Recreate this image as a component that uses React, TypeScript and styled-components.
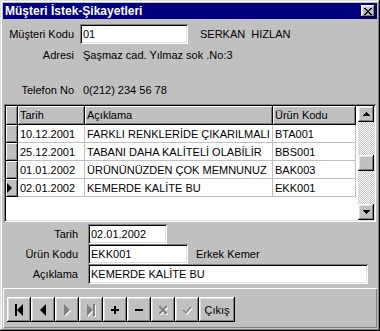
import React from "react";
import styled, { createGlobalStyle } from "styled-components";

const GlobalStyle = createGlobalStyle`
  html, body {
    margin: 0;
    padding: 0;
    background: #c0c0c0;
  }
  body {
    font-family: "Liberation Sans", Arial, sans-serif;
    font-size: 11px;
    color: #000;
  }
`;

const raised = `
  box-shadow: inset -1px -1px #000, inset 1px 1px #fff,
    inset -2px -2px #808080, inset 2px 2px #dfdfdf;
`;

const sunken = `
  box-shadow: inset 1px 1px #808080, inset -1px -1px #fff,
    inset 2px 2px #000, inset -2px -2px #dfdfdf;
`;

const Window = styled.div`
  width: 380px;
  height: 331px;
  box-sizing: border-box;
  padding: 3px;
  background: #c0c0c0;
  box-shadow: inset -1px -1px #000, inset 1px 1px #dfdfdf,
    inset -2px -2px #808080, inset 2px 2px #fff;
  display: flex;
  flex-direction: column;
`;

const TitleBar = styled.div`
  height: 16px;
  background: #000080;
  color: #fff;
  display: flex;
  align-items: center;
  justify-content: space-between;
  padding: 0 2px 0 2px;
  flex: none;
`;

const TitleText = styled.span`
  font-weight: bold;
  font-size: 12px;
  white-space: nowrap;
`;

const CloseButton = styled.div`
  width: 14px;
  height: 12px;
  background: #c0c0c0;
  ${raised}
  display: flex;
  align-items: center;
  justify-content: center;
`;

const Client = styled.div`
  flex: 1;
  display: flex;
  flex-direction: column;
`;

const FieldRow = styled.div<{ $mt?: number }>`
  display: flex;
  align-items: center;
  height: 20px;
  margin-top: ${(p) => p.$mt ?? 0}px;
  flex: none;
`;

const Label = styled.span<{ $w: number; $gap: number }>`
  width: ${(p) => p.$w}px;
  margin-right: ${(p) => p.$gap}px;
  text-align: right;
  white-space: nowrap;
  flex: none;
`;

const Value = styled.span<{ $ml?: number }>`
  margin-left: ${(p) => p.$ml ?? 0}px;
  white-space: pre;
`;

const Input = styled.div<{ $w: number; $h?: number }>`
  width: ${(p) => p.$w}px;
  height: ${(p) => p.$h ?? 20}px;
  box-sizing: border-box;
  background: #fff;
  ${sunken}
  padding-left: 3px;
  display: flex;
  align-items: center;
  white-space: nowrap;
  flex: none;
`;

const Grid = styled.div`
  margin: 4px 1px 0 1px;
  height: 118px;
  box-sizing: border-box;
  padding: 2px;
  background: #fff;
  ${sunken}
  display: flex;
  flex: none;
`;

const Table = styled.div`
  flex: 1;
  display: grid;
  grid-template-columns: 12px 67px 188px 83px 1fr;
  grid-auto-rows: 18px;
  grid-template-rows: 19px;
  align-content: start;
`;

const HeadCell = styled.div`
  background: #c0c0c0;
  border-right: 1px solid #000;
  border-bottom: 1px solid #000;
  box-shadow: inset 1px 1px #fff, inset -1px -1px #808080;
  padding-left: 2px;
  display: flex;
  align-items: center;
  white-space: nowrap;
  overflow: hidden;
`;

const IndicatorCell = styled(HeadCell)`
  padding-left: 1px;
`;

const Cell = styled.div`
  border-right: 1px solid #c0c0c0;
  border-bottom: 1px solid #c0c0c0;
  padding-left: 2px;
  display: flex;
  align-items: center;
  white-space: nowrap;
  overflow: hidden;
`;

const Filler = styled.div``;

const ScrollBar = styled.div`
  width: 16px;
  display: flex;
  flex-direction: column;
  flex: none;
`;

const ScrollButton = styled.div`
  width: 16px;
  height: 16px;
  box-sizing: border-box;
  background: #c0c0c0;
  ${raised}
  display: flex;
  align-items: center;
  justify-content: center;
  flex: none;
`;

const Track = styled.div`
  flex: 1;
  background: repeating-conic-gradient(#c0c0c0 0 25%, #fff 0 50%) 0 0 / 2px 2px;
  display: flex;
  flex-direction: column;
  padding-top: 33px;
`;

const Thumb = styled(ScrollButton)``;

const NavPanel = styled.div`
  flex: 1;
  margin-top: 4px;
  box-shadow: inset 1px 1px #fff, inset -1px -1px #808080;
  display: flex;
  align-items: flex-start;
  padding: 9px 4px 0 4px;
`;

const NavButton = styled.div<{ $w?: number }>`
  width: ${(p) => p.$w ?? 24}px;
  height: 25px;
  box-sizing: border-box;
  background: #c0c0c0;
  ${raised}
  display: flex;
  align-items: center;
  justify-content: center;
  flex: none;
`;

type Row = { tarih: string; aciklama: string; urun: string };

const rows: Row[] = [
  { tarih: "10.12.2001", aciklama: "FARKLI RENKLERİDE ÇIKARILMALI", urun: "BTA001" },
  { tarih: "25.12.2001", aciklama: "TABANI DAHA KALİTELİ OLABİLİR", urun: "BBS001" },
  { tarih: "01.01.2002", aciklama: "ÜRÜNÜNÜZDEN ÇOK MEMNUNUZ", urun: "BAK003" },
  { tarih: "02.01.2002", aciklama: "KEMERDE KALİTE BU", urun: "EKK001" },
];

const Glyph: React.FC<{ d: string; disabled?: boolean }> = ({ d, disabled }) => (
  <svg width="14" height="14" viewBox="0 0 14 14">
    {disabled && <path d={d} fill="#fff" transform="translate(1 1)" />}
    <path d={d} fill={disabled ? "#808080" : "#000"} />
  </svg>
);

const glyphs = {
  first: "M3 1h2v12H3z M5 7L11 1v12z",
  prior: "M4 7L10 1v12z",
  next: "M4 1l6 6-6 6z",
  last: "M3 1l6 6-6 6z M9 1h2v12H9z",
  plus: "M6 3h2v3h3v2H8v3H6V8H3V6h3z",
  minus: "M3 6h8v2H3z",
  cancel: "M3 3h1.5l2.5 2.5 2.5-2.5H11v1.5L8.5 7 11 9.5V11H9.5L7 8.5 4.5 11H3V9.5L5.5 7 3 4.5z",
  post: "M2 7h2l2 2 4-5h2l-6 7z",
};

const App: React.FC = () => {
  return (
    <>
      <GlobalStyle />
      <Window>
        <TitleBar>
          <TitleText>Müşteri İstek-Şikayetleri</TitleText>
          <CloseButton>
            <svg width="8" height="7" viewBox="0 0 8 7" shapeRendering="crispEdges">
              <path
                d="M0 0h2v1h1v1h2V1h1V0h2v1H7v1H6v1H5v1h1v1h1v1h1v1H6V6H5V5H3v1H2v1H0V6h1V5h1V4h1V3H2V2H1V1H0z"
                fill="#000"
              />
            </svg>
          </CloseButton>
        </TitleBar>

        <Client>
          <FieldRow $mt={5}>
            <Label $w={71} $gap={6}>Müşteri Kodu</Label>
            <Input $w={108}>01</Input>
            <Value $ml={12}>SERKAN  HIZLAN</Value>
          </FieldRow>
          <FieldRow $mt={1}>
            <Label $w={71} $gap={9}>Adresi</Label>
            <Value>Şaşmaz cad. Yılmaz sok .No:3</Value>
          </FieldRow>
          <FieldRow $mt={15}>
            <Label $w={71} $gap={9}>Telefon No</Label>
            <Value>0(212) 234 56 78</Value>
          </FieldRow>

          <Grid>
            <Table>
              <IndicatorCell />
              <HeadCell>Tarih</HeadCell>
              <HeadCell>Açıklama</HeadCell>
              <HeadCell>Ürün Kodu</HeadCell>
              <Filler />
              {rows.map((r, i) => (
                <React.Fragment key={r.tarih}>
                  <IndicatorCell>
                    {i === rows.length - 1 && (
                      <svg width="6" height="10" viewBox="0 0 6 10">
                        <path d="M0 0l5 5-5 5z" fill="#000" />
                      </svg>
                    )}
                  </IndicatorCell>
                  <Cell>{r.tarih}</Cell>
                  <Cell>{r.aciklama}</Cell>
                  <Cell>{r.urun}</Cell>
                  <Filler />
                </React.Fragment>
              ))}
            </Table>
            <ScrollBar>
              <ScrollButton>
                <svg width="7" height="4" viewBox="0 0 7 4" shapeRendering="crispEdges">
                  <path d="M3 0h1v1h1v1h1v1h1v1H0V3h1V2h1V1h1z" fill="#000" />
                </svg>
              </ScrollButton>
              <Track>
                <Thumb />
              </Track>
              <ScrollButton>
                <svg width="7" height="4" viewBox="0 0 7 4" shapeRendering="crispEdges">
                  <path d="M0 0h7v1H6v1H5v1H4v1H3V3H2V2H1V1H0z" fill="#000" />
                </svg>
              </ScrollButton>
            </ScrollBar>
          </Grid>

          <FieldRow $mt={2}>
            <Label $w={75} $gap={10}>Tarih</Label>
            <Input $w={79}>02.01.2002</Input>
          </FieldRow>
          <FieldRow>
            <Label $w={75} $gap={10}>Ürün Kodu</Label>
            <Input $w={100}>EKK001</Input>
            <Value $ml={8}>Erkek Kemer</Value>
          </FieldRow>
          <FieldRow>
            <Label $w={75} $gap={10}>Açıklama</Label>
            <Input $w={280}>KEMERDE KALİTE BU</Input>
          </FieldRow>

          <NavPanel>
            <NavButton><Glyph d={glyphs.first} /></NavButton>
            <NavButton><Glyph d={glyphs.prior} /></NavButton>
            <NavButton><Glyph d={glyphs.next} disabled /></NavButton>
            <NavButton><Glyph d={glyphs.last} disabled /></NavButton>
            <NavButton><Glyph d={glyphs.plus} /></NavButton>
            <NavButton><Glyph d={glyphs.minus} /></NavButton>
            <NavButton><Glyph d={glyphs.cancel} disabled /></NavButton>
            <NavButton><Glyph d={glyphs.post} disabled /></NavButton>
            <NavButton $w={36}>Çıkış</NavButton>
          </NavPanel>
        </Client>
      </Window>
    </>
  );
};

export default App;
